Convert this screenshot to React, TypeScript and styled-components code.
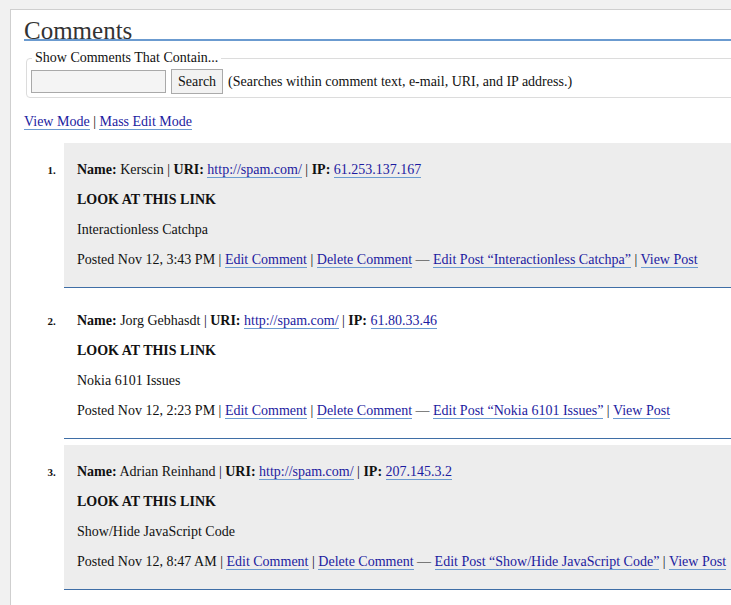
import React from "react";
import styled, { createGlobalStyle } from "styled-components";

const Global = createGlobalStyle`
  html, body { margin: 0; padding: 0; }
  body {
    background: #f1f1f1;
    font-family: "Liberation Serif", "Times New Roman", serif;
    font-size: 14px;
    color: #111;
    overflow: hidden;
  }
`;

const Panel = styled.div`
  margin: 9px -40px 0 10px;
  background: #fff;
  border-top: 1px solid #cfcfcf;
  border-left: 1px solid #cfcfcf;
  padding: 7px 0 20px 13px;
  min-height: 620px;
`;

const Heading = styled.h2`
  margin: 0;
  font-family: "Liberation Serif", "Times New Roman", serif;
  font-weight: normal;
  font-size: 25px;
  line-height: 17px;
  color: #333;
  border-bottom: 2px solid #6b9bd0;
  padding: 5px 0 0;
`;

const Fieldset = styled.fieldset`
  margin: 9px 0 0 2px;
  border: 1px solid #dcdcdc;
  border-radius: 4px;
  padding: 3px 4px 3px 4px;
  display: flex;
  align-items: center;
  gap: 5px;
`;

const Legend = styled.legend`
  padding: 0 3px;
  margin-left: 1px;
  font-size: 14px;
  color: #111;
`;

const SearchInput = styled.input`
  box-sizing: border-box;
  width: 135px;
  height: 23px;
  background: #f4f4f4;
  border: 1px solid #a9a9a9;
  margin: 0;
`;

const SearchButton = styled.button`
  box-sizing: border-box;
  height: 25px;
  padding: 0 6px;
  background: #f2f2f2;
  border: 1px solid #aaa;
  font-family: "Liberation Serif", "Times New Roman", serif;
  font-size: 14px;
  color: #111;
  margin: 0;
`;

const Hint = styled.span`
  font-size: 14px;
  color: #111;
`;

const Modes = styled.p`
  margin: 15px 0 0;
  line-height: 18px;
`;

const Link = styled.a`
  color: #1c1ba0;
  text-decoration: none;
  border-bottom: 1px solid #6b9bd0;
`;

const List = styled.ol`
  margin: 12px 0 0;
  padding: 0 0 0 40px;
  list-style: decimal;
`;

const Item = styled.li<{ $alt: boolean }>`
  background: ${(p) => (p.$alt ? "#ededed" : "#fff")};
  border-bottom: 1px solid #3f6ea6;
  padding: 17px 13px 17px;
  margin-bottom: 6px;
  &::marker {
    content: counter(list-item) ".   ";
    font-size: 11px;
    font-weight: bold;
  }
`;

const Line = styled.p`
  margin: 0;
  line-height: 20px;
  & + & { margin-top: 10px; }
`;

const Strong = styled.strong`
  font-weight: bold;
`;

type C = { name: string; ip: string; post: string; time: string };

const comments: C[] = [
  { name: "Kerscin", ip: "61.253.137.167", post: "Interactionless Catchpa", time: "Nov 12, 3:43 PM" },
  { name: "Jorg Gebhasdt", ip: "61.80.33.46", post: "Nokia 6101 Issues", time: "Nov 12, 2:23 PM" },
  { name: "Adrian Reinhand", ip: "207.145.3.2", post: "Show/Hide JavaScript Code", time: "Nov 12, 8:47 AM" },
];

export default function App() {
  return (
    <>
      <Global />
      <Panel>
        <Heading>Comments</Heading>
        <Fieldset>
          <Legend>Show Comments That Contain...</Legend>
          <SearchInput type="text" />
          <SearchButton>Search</SearchButton>
          <Hint>(Searches within comment text, e-mail, URI, and IP address.)</Hint>
        </Fieldset>
        <Modes>
          <Link href="#">View Mode</Link> | <Link href="#">Mass Edit Mode</Link>
        </Modes>
        <List>
          {comments.map((c, i) => (
            <Item key={i} $alt={i % 2 === 0}>
              <Line>
                <Strong>Name:</Strong> {c.name} | <Strong>URI:</Strong>{" "}
                <Link href="#">http://spam.com/</Link> | <Strong>IP:</Strong>{" "}
                <Link href="#">{c.ip}</Link>
              </Line>
              <Line>
                <Strong>LOOK AT THIS LINK</Strong>
              </Line>
              <Line>{c.post}</Line>
              <Line>
                Posted {c.time} | <Link href="#">Edit Comment</Link> |{" "}
                <Link href="#">Delete Comment</Link> —{" "}
                <Link href="#">Edit Post “{c.post}”</Link> | <Link href="#">View Post</Link>
              </Line>
            </Item>
          ))}
        </List>
      </Panel>
    </>
  );
}
